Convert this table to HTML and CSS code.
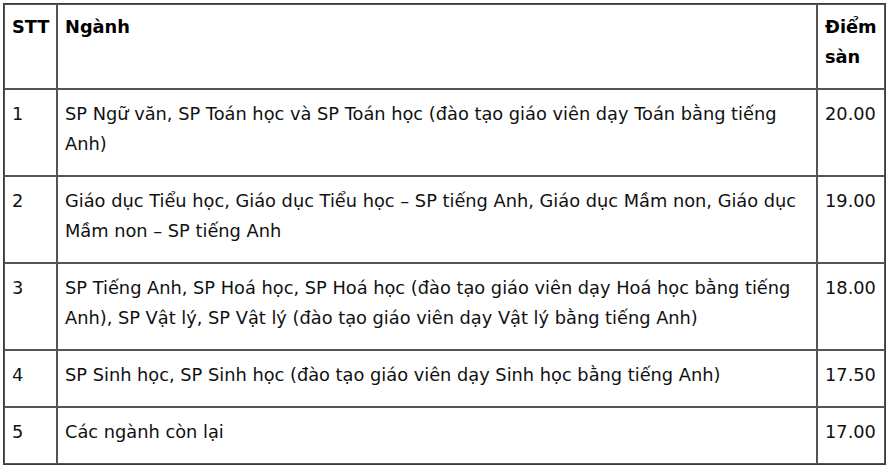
FILE: index.html
```html
<!DOCTYPE html>
<html lang="vi">
<head>
<meta charset="utf-8">
<title>Điểm sàn</title>
<link rel="stylesheet" href="styles.css">
</head>
<body>
<table class="score-table">
  <colgroup>
    <col class="col-stt">
    <col class="col-name">
    <col class="col-score">
  </colgroup>
  <thead>
    <tr>
      <th>STT</th>
      <th>Ngành</th>
      <th>Điểm sàn</th>
    </tr>
  </thead>
  <tbody>
    <tr>
      <td>1</td>
      <td>SP Ngữ văn, SP Toán học và SP Toán học (đào tạo giáo viên dạy Toán bằng tiếng Anh)</td>
      <td>20.00</td>
    </tr>
    <tr>
      <td>2</td>
      <td>Giáo dục Tiểu học, Giáo dục Tiểu học – SP tiếng Anh, Giáo dục Mầm non, Giáo dục Mầm non – SP tiếng Anh</td>
      <td>19.00</td>
    </tr>
    <tr>
      <td>3</td>
      <td>SP Tiếng Anh, SP Hoá học, SP Hoá học (đào tạo giáo viên dạy Hoá học bằng tiếng Anh), SP Vật lý, SP Vật lý (đào tạo giáo viên dạy Vật lý bằng tiếng Anh)</td>
      <td>18.00</td>
    </tr>
    <tr>
      <td>4</td>
      <td>SP Sinh học, SP Sinh học (đào tạo giáo viên dạy Sinh học bằng tiếng Anh)</td>
      <td>17.50</td>
    </tr>
    <tr>
      <td>5</td>
      <td>Các ngành còn lại</td>
      <td>17.00</td>
    </tr>
  </tbody>
</table>
</body>
</html>
```
FILE: styles.css
```css
html, body {
  margin: 0;
  padding: 0;
  background: #ffffff;
}
body {
  padding: 3px 0 0 3px;
  font-family: "DejaVu Sans", Verdana, sans-serif;
  color: #111111;
}
.score-table {
  border-collapse: separate;
  border-spacing: 0;
  border: 1px solid #3c3c3c;
  width: 881px;
  table-layout: fixed;
  font-size: 17.8px;
  line-height: 30px;
}
.col-stt { width: 53px; }
.col-name { width: 760px; }
.col-score { width: 68px; }
.score-table th,
.score-table td {
  border: 1px solid #555555;
  padding: 9px 6px 16px 7px;
  text-align: left;
  vertical-align: top;
}
.score-table th {
  font-weight: bold;
  color: #000000;
  padding-top: 7px;
  padding-bottom: 16px;
}
```
